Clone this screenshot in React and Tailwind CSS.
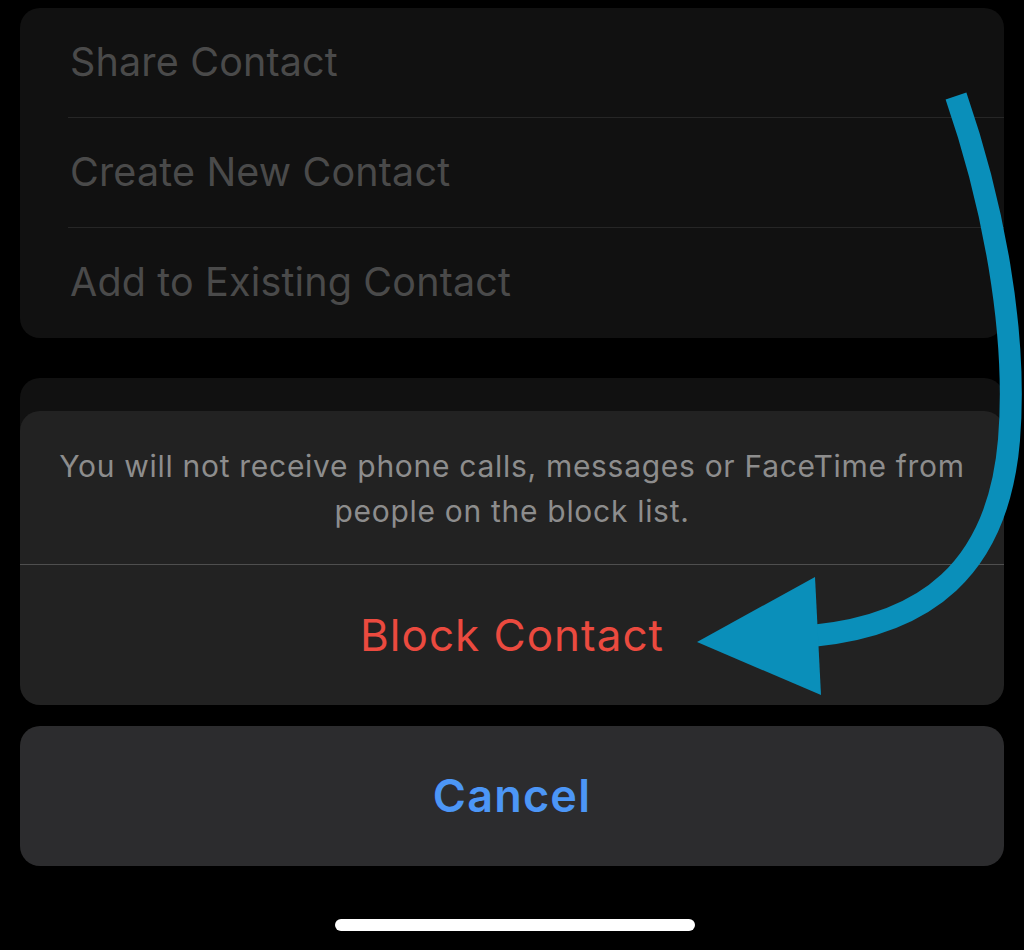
import React from "react";

const font = { fontFamily: "Inter, 'Noto Sans', 'Liberation Sans', sans-serif" };

function MenuRow({ label, last }) {
  return (
    <div className="relative h-[110px] flex items-center pl-[50px]">
      <span className="text-[39.5px] tracking-[0.15px] text-[#4a4a4a]">{label}</span>
      {!last && <div className="absolute bottom-0 left-[48px] right-0 h-px bg-[#262626]" />}
    </div>
  );
}

function CurvedArrow() {
  return (
    <svg
      className="absolute inset-0 pointer-events-none"
      width="1024"
      height="950"
      viewBox="0 0 1024 950"
    >
      <path
        d="M 956 96 C 992 200, 1018 330, 1009 440 C 998 570, 925 625, 812 636"
        fill="none"
        stroke="#0a8fba"
        strokeWidth="22"
      />
      <polygon points="697,642 815,577 821,695" fill="#0a8fba" />
    </svg>
  );
}

export default function App() {
  return (
    <div className="relative w-[1024px] h-[950px] bg-black overflow-hidden" style={font}>
      <div className="flex flex-col px-[20px] pt-[8px]">
        <div className="rounded-[20px] bg-[#111111] overflow-hidden">
          <MenuRow label="Share Contact" />
          <MenuRow label="Create New Contact" />
          <MenuRow label="Add to Existing Contact" last />
        </div>

        <div className="mt-[40px] h-[53px] rounded-t-[20px] bg-[#111111]" />

        <div className="relative -mt-[20px] rounded-[20px] bg-[#222222] overflow-hidden">
          <div className="px-[20px] pt-[33px] pb-[30px] text-center text-[30px] leading-[45px] tracking-[0.7px] text-[#8d8d8d] whitespace-nowrap">
            You will not receive phone calls, messages or FaceTime from
            <br />
            people on the block list.
          </div>
          <div className="h-px bg-[#4f4f4f]" />
          <div className="h-[140px] flex items-center justify-center">
            <span className="text-[44px] tracking-[1px] text-[#eb4a3f]">Block Contact</span>
          </div>
        </div>

        <div className="mt-[21px] h-[140px] rounded-[20px] bg-[#2c2c2e] flex items-center justify-center">
          <span className="text-[45px] font-semibold tracking-[1.2px] text-[#4c96f6]">Cancel</span>
        </div>

        <div className="mt-[53px] flex justify-center pl-[6px]">
          <div className="w-[360px] h-[12px] rounded-full bg-white" />
        </div>
      </div>
      <CurvedArrow />
    </div>
  );
}
